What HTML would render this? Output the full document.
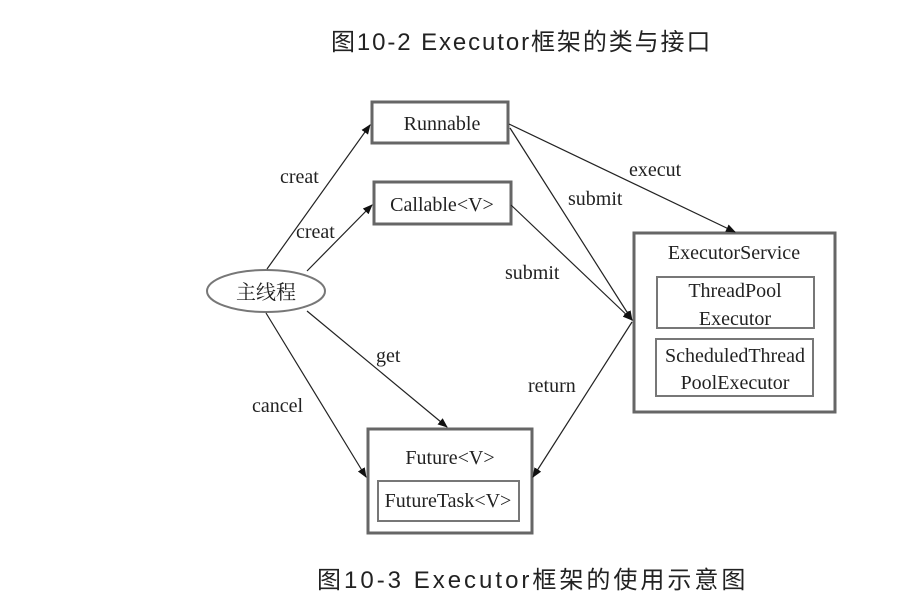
<!DOCTYPE html>
<html><head><meta charset="utf-8"><style>
body{margin:0;background:#fff;width:897px;height:606px;overflow:hidden;position:relative}
.t{position:absolute;font-family:"Liberation Sans","Noto Sans CJK SC",sans-serif;font-size:24px;color:#222;white-space:nowrap}
svg{position:absolute;left:0;top:0}
svg text{font-family:"Liberation Serif","Noto Serif CJK SC",serif;font-size:20px;fill:#222}
</style></head><body>
<div class="t" style="left:331px;top:22px;letter-spacing:1.9px">图10-2 Executor框架的类与接口</div>
<div class="t" style="left:317px;top:560px;letter-spacing:3px">图10-3 Executor框架的使用示意图</div>
<svg width="897" height="606">
<defs><marker id="a" markerWidth="10" markerHeight="8" refX="9" refY="4" orient="auto" markerUnits="userSpaceOnUse"><path d="M0,0 L10,4 L0,8z" fill="#111"/></marker></defs>
<g fill="none" stroke="#666" stroke-width="3">
<rect x="372" y="102" width="136" height="41"/>
<rect x="374" y="182" width="137" height="42"/>
<rect x="634" y="233" width="201" height="179"/>
<rect x="368" y="429" width="164" height="104"/>
</g>
<g fill="none" stroke="#777" stroke-width="2">
<rect x="657" y="277" width="157" height="51"/>
<rect x="656" y="339" width="157" height="57"/>
<rect x="378" y="481" width="141" height="40"/>
<ellipse cx="266" cy="291" rx="59" ry="21"/>
</g>
<g stroke="#222" stroke-width="1.2" fill="none" marker-end="url(#a)">
<line x1="267" y1="269" x2="370" y2="125"/>
<line x1="307" y1="271" x2="372" y2="205"/>
<line x1="509" y1="124" x2="735" y2="232"/>
<line x1="510" y1="128" x2="632" y2="320"/>
<line x1="511" y1="205" x2="632" y2="320"/>
<line x1="632" y1="322" x2="533" y2="477"/>
<line x1="307" y1="311" x2="447" y2="427"/>
<line x1="266" y1="313" x2="366" y2="477"/>
</g>
<text x="442" y="130" text-anchor="middle">Runnable</text>
<text x="442" y="211" text-anchor="middle">Callable&lt;V&gt;</text>
<text x="734" y="259" text-anchor="middle">ExecutorService</text>
<text x="735" y="297" text-anchor="middle">ThreadPool</text>
<text x="735" y="325" text-anchor="middle">Executor</text>
<text x="735" y="362" text-anchor="middle">ScheduledThread</text>
<text x="735" y="389" text-anchor="middle">PoolExecutor</text>
<text x="450" y="464" text-anchor="middle">Future&lt;V&gt;</text>
<text x="448" y="507" text-anchor="middle">FutureTask&lt;V&gt;</text>
<text x="266" y="299" text-anchor="middle" style="font-size:20px">主线程</text>
<text x="280" y="183">creat</text>
<text x="296" y="238">creat</text>
<text x="568" y="205">submit</text>
<text x="505" y="279">submit</text>
<text x="629" y="176">execut</text>
<text x="376" y="362">get</text>
<text x="528" y="392">return</text>
<text x="252" y="412">cancel</text>
</svg>
</body></html>
